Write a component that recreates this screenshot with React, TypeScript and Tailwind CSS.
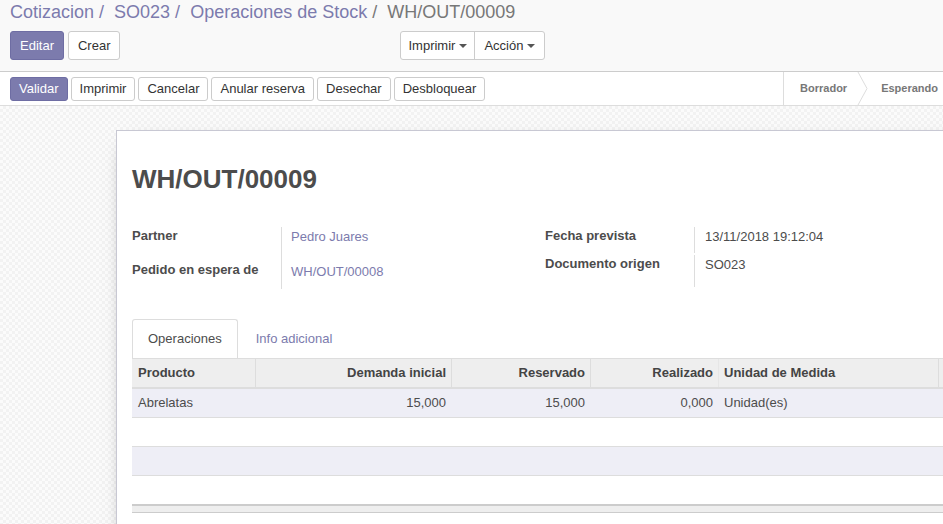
import React from 'react';

function Caret() {
  return <span className="ml-1 inline-block h-0 w-0 border-x-4 border-t-4 border-x-transparent border-t-[#555] align-middle" />;
}

const statusButtons = ['Imprimir', 'Cancelar', 'Anular reserva', 'Desechar', 'Desbloquear'];
const cols = 'grid grid-cols-[124px_196px_139px_128px_220px_1fr]';

export default function App() {
  return (
    <div className="flex h-[524px] w-[943px] flex-col overflow-hidden bg-white font-['Liberation_Sans',Arial,sans-serif] text-[13px] text-[#4c4c4c]">
      {/* Control panel */}
      <div className="h-[72px] shrink-0 border-b border-[#cccccc] bg-[#f9f9f9] pl-[10px]">
        <div className="flex h-6 items-center text-[18px] leading-6">
          <span className="text-[#7c7bad]">Cotizacion</span>
          <span className="ml-[5px] mr-[10px] text-[#7c7bad]">/</span>
          <span className="text-[#7c7bad]">SO023</span>
          <span className="ml-[5px] mr-[10px] text-[#7c7bad]">/</span>
          <span className="text-[#7c7bad]">Operaciones de Stock</span>
          <span className="ml-[5px] mr-[10px] text-[#777]">/</span>
          <span className="text-[#777]">WH/OUT/00009</span>
        </div>
        <div className="mt-[7px] flex items-center">
          <button className="h-[29px] rounded-[3px] border border-[#6e6da3] bg-[#7c7bad] px-[9px] text-white">Editar</button>
          <button className="ml-1 h-[29px] rounded-[3px] border border-[#cccccc] bg-white px-[9px] text-[#333]">Crear</button>
          <div className="ml-[280px] flex h-[29px] rounded-[3px] border border-[#cccccc] bg-white text-[#333]">
            <button className="flex items-center border-r border-[#cccccc] px-[7px]">
              Imprimir
              <Caret />
            </button>
            <button className="flex items-center px-[9px]">
              Acción
              <Caret />
            </button>
          </div>
        </div>
      </div>

      {/* Status bar */}
      <div className="flex h-[34px] shrink-0 items-center border-b border-[#dddddd] bg-white pl-[10px]">
        <div className="flex items-center gap-[3px]">
          <button className="h-6 rounded-[3px] border border-[#6e6da3] bg-[#7c7bad] px-2 text-white">Validar</button>
          {statusButtons.map((b) => (
            <button key={b} className="h-6 rounded-[3px] border border-[#cccccc] bg-white px-2 text-[#333]">
              {b}
            </button>
          ))}
        </div>
        <div className="ml-auto flex h-full items-center border-l border-[#dddddd] text-[11px] font-bold text-[#777]">
          <span className="pl-4 pr-[10px]">Borrador</span>
          <svg width="12" height="33" viewBox="0 0 12 33" className="shrink-0">
            <path d="M1 0 L10 16.5 L1 33" fill="none" stroke="#dddddd" strokeWidth="1" />
          </svg>
          <span className="pl-3 pr-[5px]">Esperando</span>
        </div>
      </div>

      {/* Content */}
      <div className="flex-1 overflow-hidden bg-[repeating-conic-gradient(#f2f2f2_0%_25%,#fbfbfb_0%_50%)] bg-size-[6px_6px] pl-[116px] pt-6">
        <div className="h-[600px] w-[900px] border border-[#c8c8d3] bg-white pl-[15px] pt-[33px] shadow-[0_5px_20px_-15px_black]">
          <h1 className="text-[26px] font-bold leading-[30px] text-[#4c4c4c]">WH/OUT/00009</h1>

          {/* Groups */}
          <div className="mt-[33px] flex">
            <div className="grid w-[413px] grid-cols-[150px_1fr]">
              <div className="h-[34px] border-r border-[#dddddd] font-bold leading-[18px]">Partner</div>
              <div className="pl-[9px] pt-[1px] leading-[18px] text-[#7c7bad]">Pedro Juares</div>
              <div className="h-[28px] border-r border-[#dddddd] font-bold leading-[18px]">Pedido en espera de</div>
              <div className="pl-[9px] pt-[2px] leading-[18px] text-[#7c7bad]">WH/OUT/00008</div>
            </div>
            <div className="grid grid-cols-[150px_1fr]">
              <div className="h-[26px] border-r border-[#dddddd] font-bold leading-[18px]">Fecha prevista</div>
              <div className="pl-[10px] pt-[1px] leading-[18px]">13/11/2018 19:12:04</div>
              <div className="h-[32px] border-r border-[#dddddd] font-bold leading-[18px]">Documento origen</div>
              <div className="pl-[10px] pt-[1px] leading-[18px]">SO023</div>
            </div>
          </div>

          {/* Tabs */}
          <div className="mt-[30px] flex">
            <div className="mr-[2px] flex h-[39px] items-center rounded-t-[3px] border border-b-0 border-[#dddddd] bg-white px-[15px]">
              Operaciones
            </div>
            <div className="flex h-[39px] items-center border border-transparent px-[15px] text-[#7c7bad]">Info adicional</div>
          </div>

          {/* Table */}
          <div className="w-[1000px]">
            <div className={`${cols} h-[31px] border-b-2 border-t border-[#dddddd] bg-[#eeeeee] font-bold text-[#444]`}>
              <div className="flex items-center border-r border-[#dddddd] px-[6px]">Producto</div>
              <div className="flex items-center justify-end border-r border-[#dddddd] pr-[5px]">Demanda inicial</div>
              <div className="flex items-center justify-end border-r border-[#dddddd] pr-[5px]">Reservado</div>
              <div className="flex items-center justify-end border-r border-[#e6e6e6] pr-[5px]">Realizado</div>
              <div className="flex items-center border-r border-[#dddddd] px-[5px]">Unidad de Medida</div>
              <div />
            </div>
            <div className={`${cols} h-[29px] items-center border-b border-[#dddddd] bg-[#eeeef6]`}>
              <div className="px-[6px]">Abrelatas</div>
              <div className="pr-[6px] text-right">15,000</div>
              <div className="pr-[6px] text-right">15,000</div>
              <div className="pr-[6px] text-right">0,000</div>
              <div className="px-[5px]">Unidad(es)</div>
              <div />
            </div>
            <div className="h-[29px] border-b border-[#dddddd] bg-white" />
            <div className="h-[29px] border-b border-[#dddddd] bg-[#eeeef6]" />
            <div className="h-[28px] bg-white" />
            <div className="h-[9px] border-b border-t-2 border-[#cccccc] bg-[#eeeeee]" />
          </div>
        </div>
      </div>
    </div>
  );
}
